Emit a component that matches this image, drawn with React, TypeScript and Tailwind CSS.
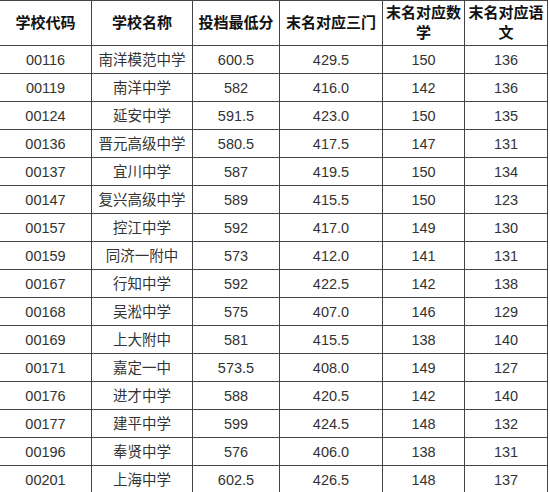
const HEADERS = ["学校代码", "学校名称", "投档最低分", "末名对应三门", "末名对应数学", "末名对应语文"];

const ROWS = [
  ["00116", "南洋模范中学", "600.5", "429.5", "150", "136"],
  ["00119", "南洋中学", "582", "416.0", "142", "136"],
  ["00124", "延安中学", "591.5", "423.0", "150", "135"],
  ["00136", "晋元高级中学", "580.5", "417.5", "147", "131"],
  ["00137", "宜川中学", "587", "419.5", "150", "134"],
  ["00147", "复兴高级中学", "589", "415.5", "150", "123"],
  ["00157", "控江中学", "592", "417.0", "149", "130"],
  ["00159", "同济一附中", "573", "412.0", "141", "131"],
  ["00167", "行知中学", "592", "422.5", "142", "138"],
  ["00168", "吴淞中学", "575", "407.0", "146", "129"],
  ["00169", "上大附中", "581", "415.5", "138", "140"],
  ["00171", "嘉定一中", "573.5", "408.0", "149", "127"],
  ["00176", "进才中学", "588", "420.5", "142", "140"],
  ["00177", "建平中学", "599", "424.5", "148", "132"],
  ["00196", "奉贤中学", "576", "406.0", "138", "131"],
  ["00201", "上海中学", "602.5", "426.5", "148", "137"],
];

const WIDTHS = ["w-[92px]", "w-[101px]", "w-[87px]", "w-[103px]", "w-[82px]", "w-[83px]"];

export default function App() {
  return (
    <div className="w-[550px] h-[492px] overflow-hidden bg-white font-['Liberation_Sans','Noto_Sans_CJK_SC',sans-serif]">
      <table className="border-collapse table-fixed w-[549px] -ml-px">
        <thead>
          <tr className="h-[45px]">
            {HEADERS.map((h, i) => (
              <th
                key={h}
                className={`${WIDTHS[i]} border border-[#444] p-0 text-[15px] leading-[20px] font-bold text-[#111] text-center align-middle break-all`}
              >
                {h}
              </th>
            ))}
          </tr>
        </thead>
        <tbody>
          {ROWS.map((row) => (
            <tr key={row[0]} className="h-[28px]">
              {row.map((cell, i) => (
                <td
                  key={i}
                  className="border border-[#444] p-0 text-[14.5px] leading-[18px] text-[#333] text-center align-middle"
                >
                  {cell}
                </td>
              ))}
            </tr>
          ))}
        </tbody>
      </table>
    </div>
  );
}
